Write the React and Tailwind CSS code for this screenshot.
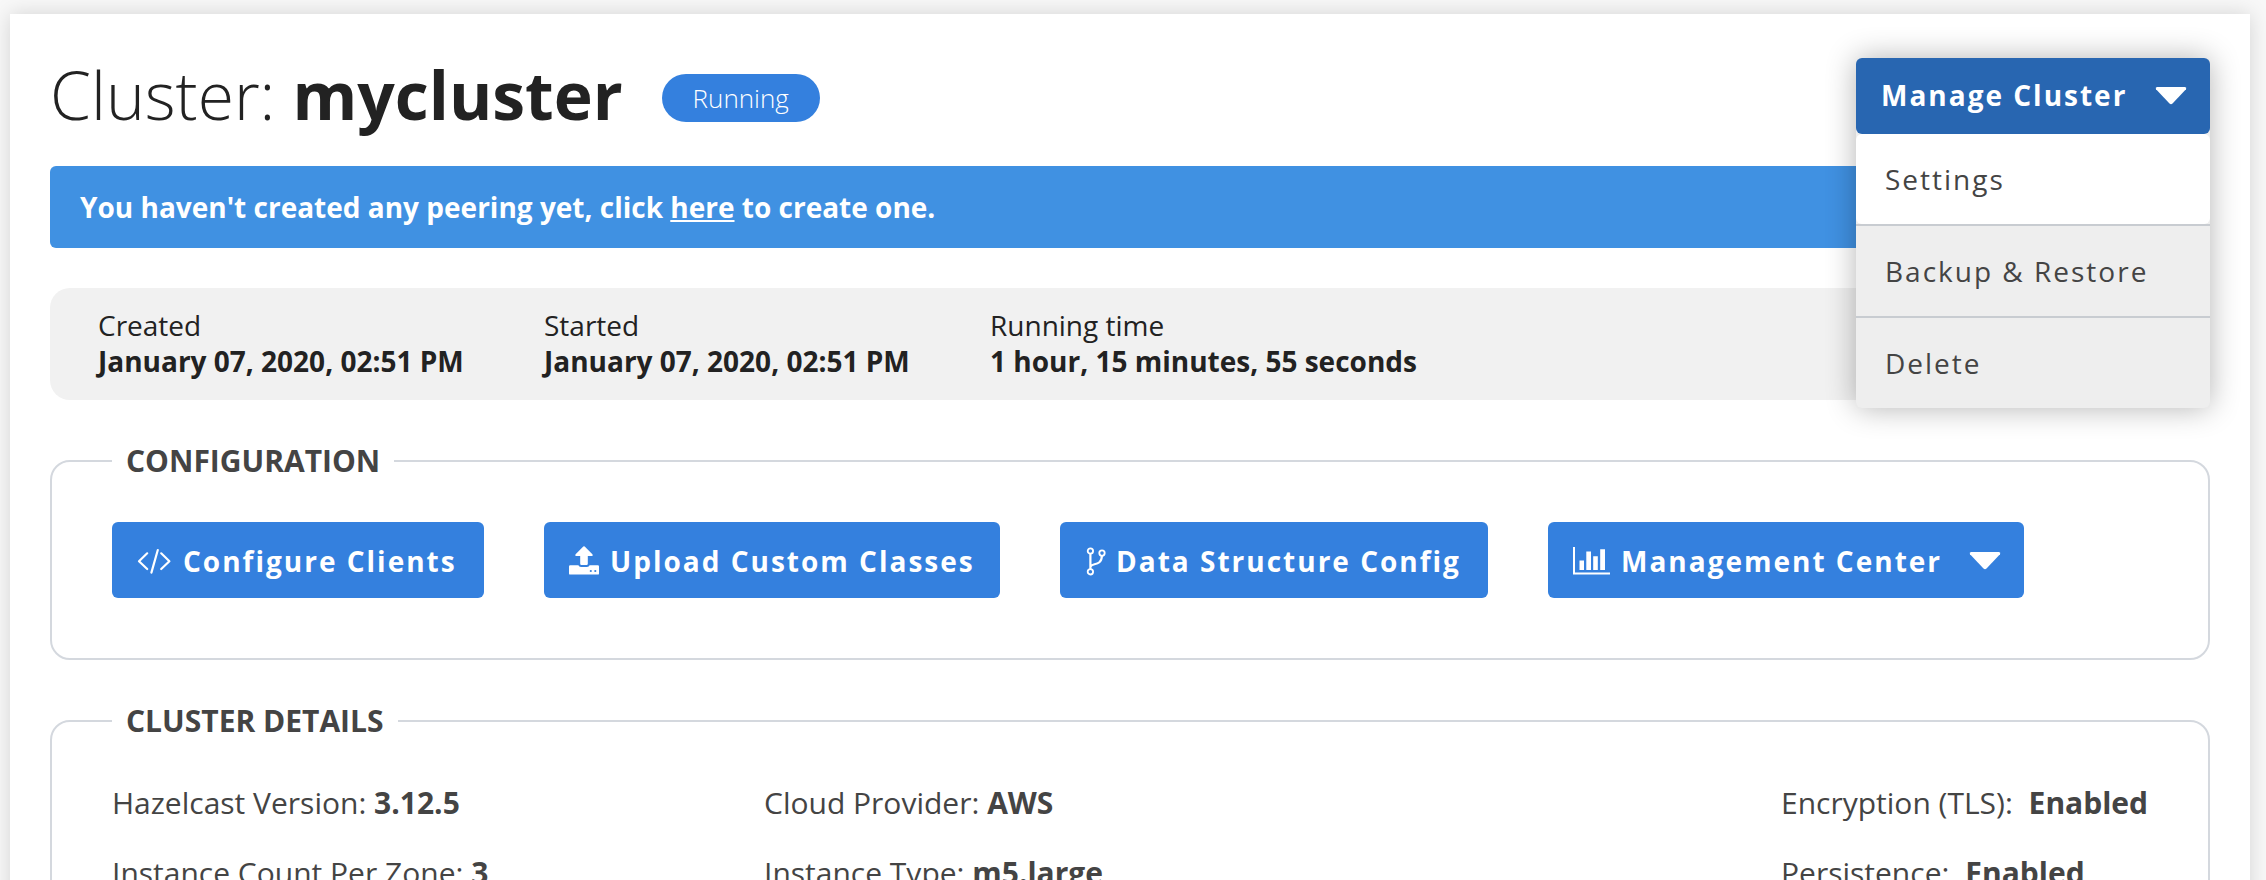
const font = "font-['Open_Sans',sans-serif]";

function CodeIcon() {
  return (
    <svg className="h-[26px] w-[34px] shrink-0" viewBox="0 0 34 26" fill="none" stroke="currentColor" strokeWidth="2.2" strokeLinecap="round" strokeLinejoin="round">
      <path d="M10.2 5.3L2 13.2L10.2 21M24.2 5.3L32.4 13.2L24.2 21M20.8 2L14.4 24.6" />
    </svg>
  );
}

function UploadIcon() {
  return (
    <svg className="h-[30px] w-[30px] shrink-0" viewBox="0 0 30 30" fill="currentColor">
      <path d="M14.3 .5Q15 -.2 15.7 .5L23.4 8.2Q24.4 10 22.8 10H18.8V17.8Q18.8 19 17.6 19H12.4Q11.2 19 11.2 17.8V10H7.2Q5.6 10 6.6 8.2Z" />
      <path d="M1.2 19.2H9.4Q10 21 12 21H18Q20 21 20.6 19.2H28.8Q30 19.2 30 20.4V27.4Q30 28.6 28.8 28.6H1.2Q0 28.6 0 27.4V20.4Q0 19.2 1.2 19.2Z" />
      <circle cx="21.8" cy="25" r="1.1" fill="#3480de" />
      <circle cx="26.3" cy="25" r="1.1" fill="#3480de" />
    </svg>
  );
}

function BranchIcon() {
  return (
    <svg className="h-[29px] w-[20px] shrink-0" viewBox="0 0 20 29" fill="none" stroke="currentColor">
      <g strokeWidth="1.8">
        <circle cx="4.4" cy="4" r="2.7" />
        <circle cx="4.4" cy="24.8" r="2.7" />
        <circle cx="16" cy="6.1" r="2.7" />
      </g>
      <path strokeWidth="2.2" d="M4.4 7V22M15.9 9C15.6 15.5 12 16.4 8.5 17.2Q5.2 18 4.4 19.8" />
    </svg>
  );
}

function ChartIcon() {
  return (
    <svg className="h-[28px] w-[37px] shrink-0" viewBox="0 0 37 28" fill="currentColor">
      <path d="M0 0H2V25.5H37V27.5H0ZM6.5 13.5H11V23H6.5ZM13.3 4.5H18V23H13.3ZM20.2 9.2H24.8V23H20.2ZM27.2 2.2H32V23H27.2Z" />
    </svg>
  );
}

function Caret() {
  return (
    <svg className="h-[18px] w-[32px] shrink-0" viewBox="0 0 32 18" fill="currentColor">
      <path d="M2 0H30Q32 .6 31 2.2L17.5 16.5Q16 18 14.5 16.5L1 2.2Q0 .6 2 0Z" />
    </svg>
  );
}

function Button({ icon, label, caret, className }) {
  return (
    <button className={"flex h-[76px] shrink-0 items-center rounded-[6px] bg-[#3480de] pt-[2px] text-[28px] font-bold tracking-[2px] whitespace-nowrap text-white " + className}>
      {icon}
      <span>{label}</span>
      {caret && <span className="ml-auto"><Caret /></span>}
    </button>
  );
}

function Stat({ label, value, className }) {
  return (
    <div className={"text-[28px] leading-[36px] whitespace-nowrap text-[#222] " + className}>
      <div>{label}</div>
      <div className="font-bold">{value}</div>
    </div>
  );
}

function Detail({ label, value, gap }) {
  return (
    <div className="h-[70px] leading-[40px] whitespace-nowrap">
      {label}
      <b className={gap}>{value}</b>
    </div>
  );
}

function Section({ title, titleWidth, className, children }) {
  return (
    <section className={"rounded-[20px] border-2 border-[#d4d8de] " + className}>
      <h2 className={"-mt-[21px] ml-[60px] h-[40px] bg-white pl-[14px] text-[30px] leading-[40px] font-bold whitespace-nowrap text-[#444] " + titleWidth}>{title}</h2>
      {children}
    </section>
  );
}

export default function App() {
  return (
    <div className={"h-[880px] w-[2266px] overflow-hidden bg-[#f8f8f8] pt-[14px] pl-[10px] " + font}>
      <main className="h-[900px] w-[2240px] bg-white px-[40px] pt-[44px] shadow-[0_0_20px_rgba(0,0,0,0.15)]">
        <header className="flex h-[76px] items-start justify-between">
          <div className="flex h-[76px] items-center">
            <h1 className="-mt-[4px] text-[66px] leading-[76px] font-light whitespace-nowrap text-[#222]">
              Cluster: <b className="font-bold">mycluster</b>
            </h1>
            <span className="mt-[4px] ml-[39px] flex h-[48px] w-[158px] items-center justify-center rounded-full bg-[#3480de] text-[26px] font-light text-white">Running</span>
          </div>
          <div className="relative z-10 h-[350px] w-[354px] shrink-0 rounded-[6px] bg-[#eee] text-[28px] tracking-[2px] text-[#444] shadow-[0_0_30px_rgba(0,0,0,0.3)]">
            <button className="flex h-[76px] w-full items-center justify-between rounded-[6px] bg-[#2866b1] pr-[23px] pl-[25px] font-bold whitespace-nowrap text-white">
              <span className="-mt-[2px]">Manage Cluster</span>
              <Caret />
            </button>
            <div className="flex h-[90px] items-center rounded-[6px] bg-white pl-[29px]">Settings</div>
            <div className="flex h-[92px] items-center border-t-2 border-[#c8ccd1] pl-[29px]">Backup &amp; Restore</div>
            <div className="flex h-[92px] items-center border-t-2 border-[#c8ccd1] pl-[29px]">Delete</div>
          </div>
        </header>
        <div className="mt-[32px] h-[82px] rounded-[6px] bg-[#4091e2] pl-[30px] text-[28px] leading-[82px] font-bold whitespace-nowrap text-white">
          You haven't created any peering yet, click <a className="underline decoration-2 underline-offset-2">here</a> to create one.
        </div>
        <div className="mt-[40px] flex h-[112px] rounded-[20px] bg-[#f1f1f1] pt-[19px] pl-[48px]">
          <Stat label="Created" value="January 07, 2020, 02:51 PM" className="w-[446px]" />
          <Stat label="Started" value="January 07, 2020, 02:51 PM" className="w-[446px]" />
          <Stat label="Running time" value="1 hour, 15 minutes, 55 seconds" className="w-[446px]" />
        </div>
        <Section title="CONFIGURATION" titleWidth="w-[282px]" className="mt-[60px] h-[200px]">
          <div className="mt-[41px] flex gap-[60px] pl-[60px]">
            <Button icon={<CodeIcon />} label="Configure Clients" className="w-[372px] gap-[12px] pl-[25px]" />
            <Button icon={<UploadIcon />} label="Upload Custom Classes" className="w-[456px] gap-[11px] pl-[25px]" />
            <Button icon={<BranchIcon />} label="Data Structure Config" className="w-[428px] gap-[10px] pl-[26px]" />
            <Button icon={<ChartIcon />} label="Management Center" caret className="w-[476px] gap-[11px] pr-[23px] pl-[25px]" />
          </div>
        </Section>
        <Section title="CLUSTER DETAILS" titleWidth="w-[286px]" className="mt-[60px] h-[300px]">
          <div className="mt-[42px] flex pl-[60px] text-[30px] text-[#444]">
            <div className="w-[652px]">
              <Detail label="Hazelcast Version: " value="3.12.5" />
              <Detail label="Instance Count Per Zone: " value="3" />
            </div>
            <div className="w-[1017px]">
              <Detail label="Cloud Provider: " value="AWS" />
              <Detail label="Instance Type: " value="m5.large" />
            </div>
            <div>
              <Detail label="Encryption (TLS): " value="Enabled" gap="ml-[8px]" />
              <Detail label="Persistence: " value="Enabled" gap="ml-[8px]" />
            </div>
          </div>
        </Section>
      </main>
    </div>
  );
}
